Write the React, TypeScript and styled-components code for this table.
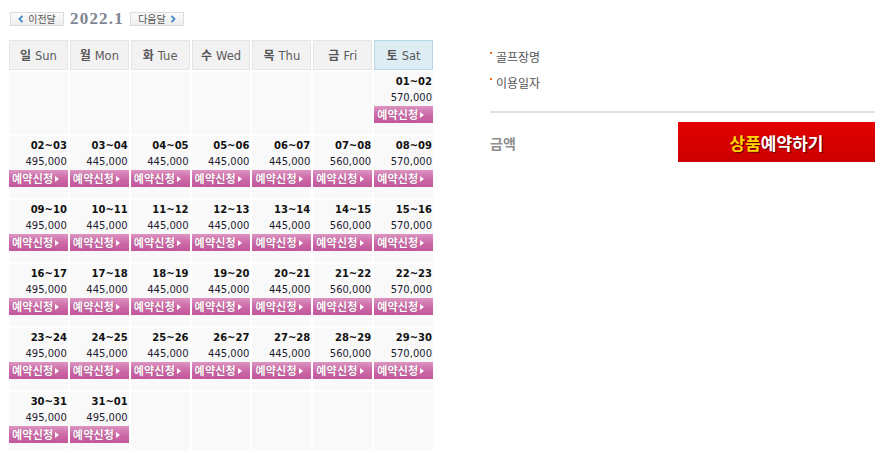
import React from "react";
import styled, { createGlobalStyle } from "styled-components";

const Global = createGlobalStyle`
  html, body { margin: 0; padding: 0; background: #fff; }
  body { font-family: "DejaVu Sans", "Noto Sans CJK KR", sans-serif; }
`;

const Page = styled.div`
  display: flex;
  align-items: flex-start;
  padding: 11px 0 0 9px;
`;

const Left = styled.div`
  width: 424px;
  display: flex;
  flex-direction: column;
`;

const Nav = styled.div`
  display: flex;
  align-items: center;
  gap: 6px;
  height: 16px;
  margin-left: 1px;
`;

const NavButton = styled.div`
  box-sizing: border-box;
  height: 14px;
  width: 54px;
  display: flex;
  align-items: center;
  justify-content: center;
  gap: 4px;
  border: 1px solid #dcdcdc;
  background: linear-gradient(#fbfbfb, #eeeeee);
  font-family: "Noto Sans CJK KR", sans-serif;
  font-size: 10px;
  line-height: 12px;
  color: #555;
`;

const Chevron = styled.svg`
  width: 6px;
  height: 8px;
  flex: none;
`;

const MonthTitle = styled.div`
  font-family: "Liberation Serif", serif;
  font-weight: bold;
  font-size: 17px;
  letter-spacing: 1.2px;
  line-height: 16px;
  color: #7d8592;
`;

const Grid = styled.div`
  margin-top: 13px;
  display: grid;
  grid-template-columns: repeat(7, 1fr);
  gap: 2px;
`;

const HeadCell = styled.div<{ $sat?: boolean }>`
  box-sizing: border-box;
  height: 30px;
  border: 1px solid ${(p) => (p.$sat ? "#b9d8e7" : "#e5e5e5")};
  background: ${(p) => (p.$sat ? "#ddedf3" : "#f2f2f2")};
  text-align: center;
  font-size: 11.5px;
  line-height: 28px;
  color: #5a5a5a;
`;

const Kor = styled.span`
  font-family: "Noto Sans CJK KR", sans-serif;
  font-weight: bold;
  font-size: 12px;
  color: #555;
  margin-right: 4px;
`;

const DayCell = styled.div`
  box-sizing: border-box;
  height: 62px;
  background: #f9f9f9;
  padding-top: 2px;
  text-align: right;
`;

const DateText = styled.div`
  font-family: "DejaVu Sans", sans-serif;
  font-weight: bold;
  font-size: 10px;
  line-height: 16px;
  color: #111;
  padding-right: 1px;
`;

const Price = styled.div`
  font-family: "DejaVu Sans", sans-serif;
  font-size: 10px;
  line-height: 16px;
  color: #1c1c30;
  padding-right: 1px;
`;

const ReserveBtn = styled.div`
  box-sizing: border-box;
  height: 17px;
  display: flex;
  align-items: center;
  padding-left: 3px;
  gap: 1px;
  background: linear-gradient(#de94c2, #cd6aa8 50%, #c2579b);
  color: #fff;
  font-family: "Noto Sans CJK KR", sans-serif;
  font-weight: bold;
  font-size: 11px;
  letter-spacing: 0.2px;
  line-height: 17px;
  text-shadow: 0 0 1px rgba(110, 20, 70, 0.6);
  cursor: pointer;
`;

const Tri = styled.span`
  width: 0;
  height: 0;
  border-top: 3.5px solid transparent;
  border-bottom: 3.5px solid transparent;
  border-left: 4px solid #fff;
  margin-left: 1px;
`;

const Right = styled.div`
  width: 385px;
  margin-left: 57px;
  margin-top: 32px;
  display: flex;
  flex-direction: column;
`;

const InfoItem = styled.div`
  display: flex;
  align-items: center;
  height: 26px;
  font-family: "Noto Sans CJK KR", sans-serif;
  font-size: 12px;
  color: #555;
`;

const Bullet = styled.span`
  width: 2px;
  height: 2px;
  background: #f26b1d;
  margin: 0 4px 6px 0;
`;

const Divider = styled.div`
  height: 2px;
  background: #e0e0e0;
  margin-top: 16px;
`;

const PriceRow = styled.div`
  display: flex;
  align-items: center;
  justify-content: space-between;
  margin-top: 9px;
`;

const PriceLabel = styled.div`
  font-family: "Noto Sans CJK KR", sans-serif;
  font-weight: bold;
  font-size: 14px;
  color: #8f8f8f;
  margin-top: 2px;
`;

const BigButton = styled.div`
  width: 197px;
  height: 40px;
  display: flex;
  align-items: center;
  justify-content: center;
  background: linear-gradient(#e30000, #cc0000);
  font-family: "Noto Sans CJK KR", sans-serif;
  font-weight: bold;
  font-size: 17px;
  color: #fff;
  text-shadow: 1px 1px 0 #6a0000;
`;

const Yellow = styled.span`
  color: #ffd400;
`;

const ChevronLeft = () => (
  <Chevron viewBox="0 0 6 8">
    <path d="M4.5 0.8 L1.5 4 L4.5 7.2" fill="none" stroke="#3f86c6" strokeWidth="1.8" />
  </Chevron>
);
const ChevronRight = () => (
  <Chevron viewBox="0 0 6 8">
    <path d="M1.5 0.8 L4.5 4 L1.5 7.2" fill="none" stroke="#3f86c6" strokeWidth="1.8" />
  </Chevron>
);

const heads = [
  ["일", "Sun"],
  ["월", "Mon"],
  ["화", "Tue"],
  ["수", "Wed"],
  ["목", "Thu"],
  ["금", "Fri"],
  ["토", "Sat"],
];

const pad = (n: number) => String(n).padStart(2, "0");
const weekPrices = ["495,000", "445,000", "445,000", "445,000", "445,000", "560,000", "570,000"];

type Day = { label: string; price: string } | null;

const buildDays = (): Day[] => {
  const days: Day[] = [];
  for (let i = 0; i < 6; i++) days.push(null);
  for (let d = 1; d <= 31; d++) {
    const idx = days.length % 7;
    const next = d === 31 ? 1 : d + 1;
    const price = d >= 30 ? "495,000" : weekPrices[idx];
    days.push({ label: `${pad(d)}~${pad(next)}`, price });
  }
  while (days.length < 42) days.push(null);
  return days;
};

export default function App() {
  const days = buildDays();
  return (
    <>
      <Global />
      <Page>
        <Left>
          <Nav>
            <NavButton>
              <ChevronLeft />
              이전달
            </NavButton>
            <MonthTitle>2022.1</MonthTitle>
            <NavButton>
              다음달
              <ChevronRight />
            </NavButton>
          </Nav>
          <Grid>
            {heads.map(([k, e], i) => (
              <HeadCell key={e} $sat={i === 6}>
                <Kor>{k}</Kor>
                {e}
              </HeadCell>
            ))}
            {days.map((d, i) => (
              <DayCell key={i}>
                {d && (
                  <>
                    <DateText>{d.label}</DateText>
                    <Price>{d.price}</Price>
                    <ReserveBtn>
                      예약신청
                      <Tri />
                    </ReserveBtn>
                  </>
                )}
              </DayCell>
            ))}
          </Grid>
        </Left>
        <Right>
          <InfoItem>
            <Bullet />
            골프장명
          </InfoItem>
          <InfoItem>
            <Bullet />
            이용일자
          </InfoItem>
          <Divider />
          <PriceRow>
            <PriceLabel>금액</PriceLabel>
            <BigButton>
              <Yellow>상품</Yellow>예약하기
            </BigButton>
          </PriceRow>
        </Right>
      </Page>
    </>
  );
}
